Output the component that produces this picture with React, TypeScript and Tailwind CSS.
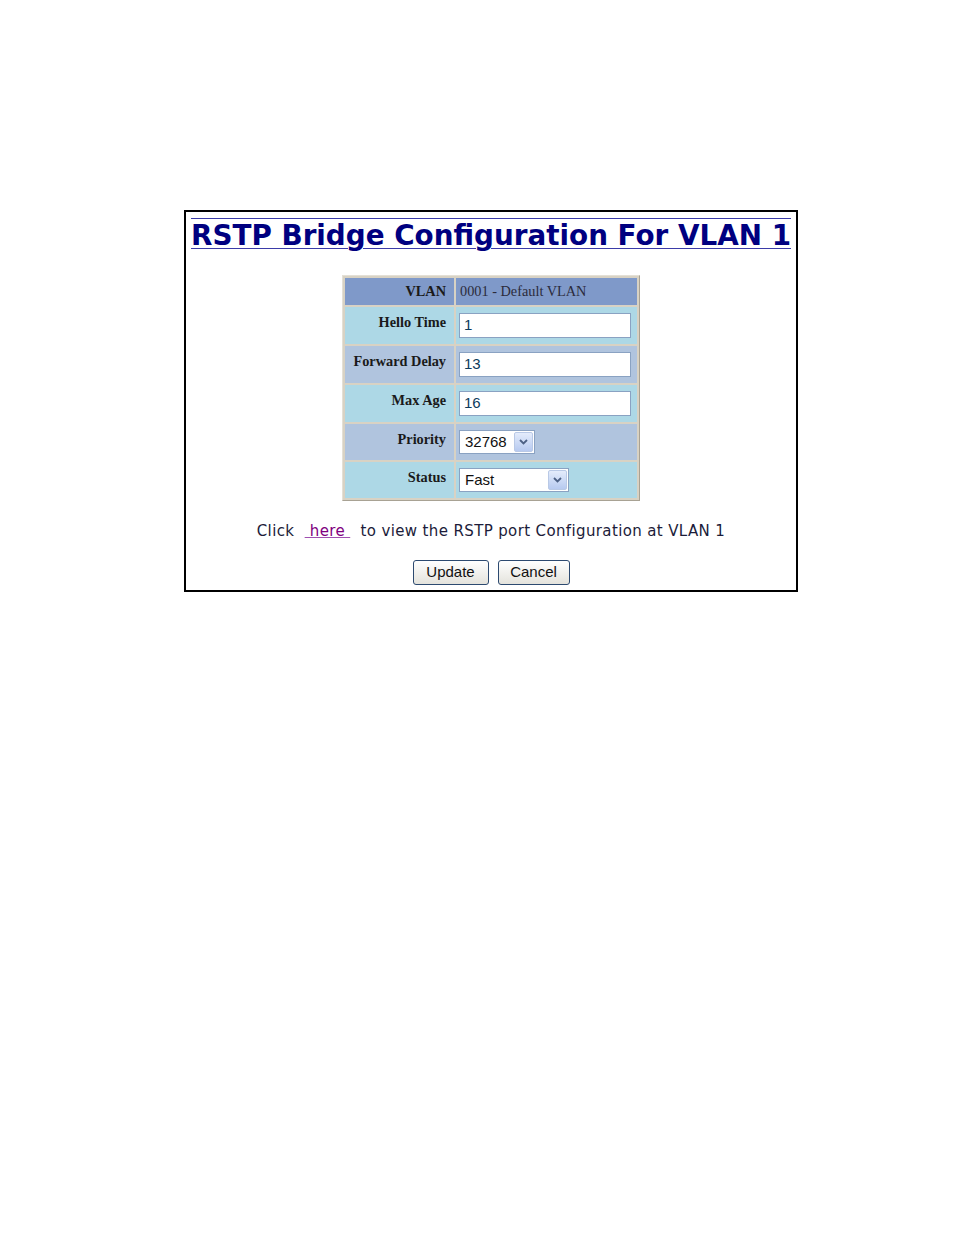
import React from "react";

const labelCls =
  "w-[109px] bg-inherit pr-[8px] pt-[6px] text-right align-top font-bold text-[14.3px] leading-[18px] text-[#1a1a1a] [font-family:'Liberation_Serif',serif]";

function TextBox({ value }: { value: string }) {
  return (
    <div className="flex h-[25px] w-[172px] items-center border border-[#8aa2c2] bg-white pl-[4px] text-[15px] text-[#0d3b5c] [font-family:'Liberation_Sans',Arial,sans-serif]">
      {value}
    </div>
  );
}

function Chevron() {
  return (
    <svg width="9" height="6" viewBox="0 0 9 6">
      <path d="M1 1 L4.5 4.5 L8 1" fill="none" stroke="#4d6185" strokeWidth="1.8" />
    </svg>
  );
}

function Select({ value, width }: { value: string; width: string }) {
  return (
    <div
      className={`flex h-[24px] items-center border border-[#8aa2c2] bg-white p-[1px] text-[15px] text-[#111] [font-family:'Liberation_Sans',Arial,sans-serif] ${width}`}
    >
      <span className="flex-1 pl-[4px]">{value}</span>
      <span className="flex h-[20px] w-[19px] items-center justify-center rounded-[2px] border border-[#b9c9e6] bg-gradient-to-b from-[#e4ecfb] to-[#b7caf0]">
        <Chevron />
      </span>
    </div>
  );
}

function Row({
  label,
  bg,
  h,
  children,
}: {
  label: string;
  bg: string;
  h: string;
  children: React.ReactNode;
}) {
  return (
    <tr className={bg}>
      <td className={`${labelCls} ${bg}`}>{label}</td>
      <td className={`w-[181px] px-[3px] pt-[6px] align-top ${h} ${bg}`}>{children}</td>
    </tr>
  );
}

function Button({ children, width }: { children: React.ReactNode; width: string }) {
  return (
    <div
      className={`flex h-[25px] items-center justify-center rounded-[3px] border border-[#2d4a70] bg-gradient-to-b from-[#ffffff] to-[#e4e3dc] text-[15px] text-[#111] [font-family:'Liberation_Sans',Arial,sans-serif] ${width}`}
    >
      {children}
    </div>
  );
}

export default function App() {
  return (
    <div className="min-h-[1235px] w-[954px] bg-white pt-[210px]">
      <div className="ml-[184px] flex h-[382px] w-[614px] flex-col items-center border-2 border-black">
        <h1 className="mt-[7px] whitespace-nowrap text-[27.8px] font-bold leading-[33px] text-[#000080] decoration-[#3b3ba8] decoration-1 underline-offset-[3px] [text-decoration-line:underline_overline] [font-family:'DejaVu_Sans',Verdana,sans-serif]">
          RSTP Bridge Configuration For VLAN 1
        </h1>

        <table className="mt-[23px] border-separate border-spacing-[2px] border border-t-[#e4e0d6] border-l-[#e4e0d6] border-r-[#a8a294] border-b-[#a8a294] bg-[#d8d2c4]">
          <tbody>
            <tr>
              <td className="h-[27px] bg-[#7f99c9] pr-[8px] text-right font-bold text-[14.3px] text-[#1a1a1a] [font-family:'Liberation_Serif',serif]">
                VLAN
              </td>
              <td className="h-[27px] bg-[#7f99c9] px-[4px] text-[14.3px] text-[#2b2b3b] [font-family:'Liberation_Serif',serif]">
                0001 - Default VLAN
              </td>
            </tr>
            <Row label="Hello Time" bg="bg-[#add8e6]" h="h-[37px]">
              <TextBox value="1" />
            </Row>
            <Row label="Forward Delay" bg="bg-[#b0c4de]" h="h-[37px]">
              <TextBox value="13" />
            </Row>
            <Row label="Max Age" bg="bg-[#add8e6]" h="h-[37px]">
              <TextBox value="16" />
            </Row>
            <Row label="Priority" bg="bg-[#b0c4de]" h="h-[36px]">
              <Select value="32768" width="w-[76px]" />
            </Row>
            <Row label="Status" bg="bg-[#add8e6]" h="h-[36px]">
              <Select value="Fast" width="w-[110px]" />
            </Row>
          </tbody>
        </table>

        <p className="mt-[19px] whitespace-pre text-[15px] tracking-[0.37px] text-[#1c1c3a] [font-family:'DejaVu_Sans',Verdana,sans-serif]">
          {"Click  "}
          <span className="text-[#800080] underline decoration-[#a050b0]">{" here "}</span>
          {"  to view the RSTP port Configuration at VLAN 1"}
        </p>

        <div className="mt-[17px] flex gap-[9px]">
          <Button width="w-[76px]">Update</Button>
          <Button width="w-[72px]">Cancel</Button>
        </div>
      </div>
    </div>
  );
}
